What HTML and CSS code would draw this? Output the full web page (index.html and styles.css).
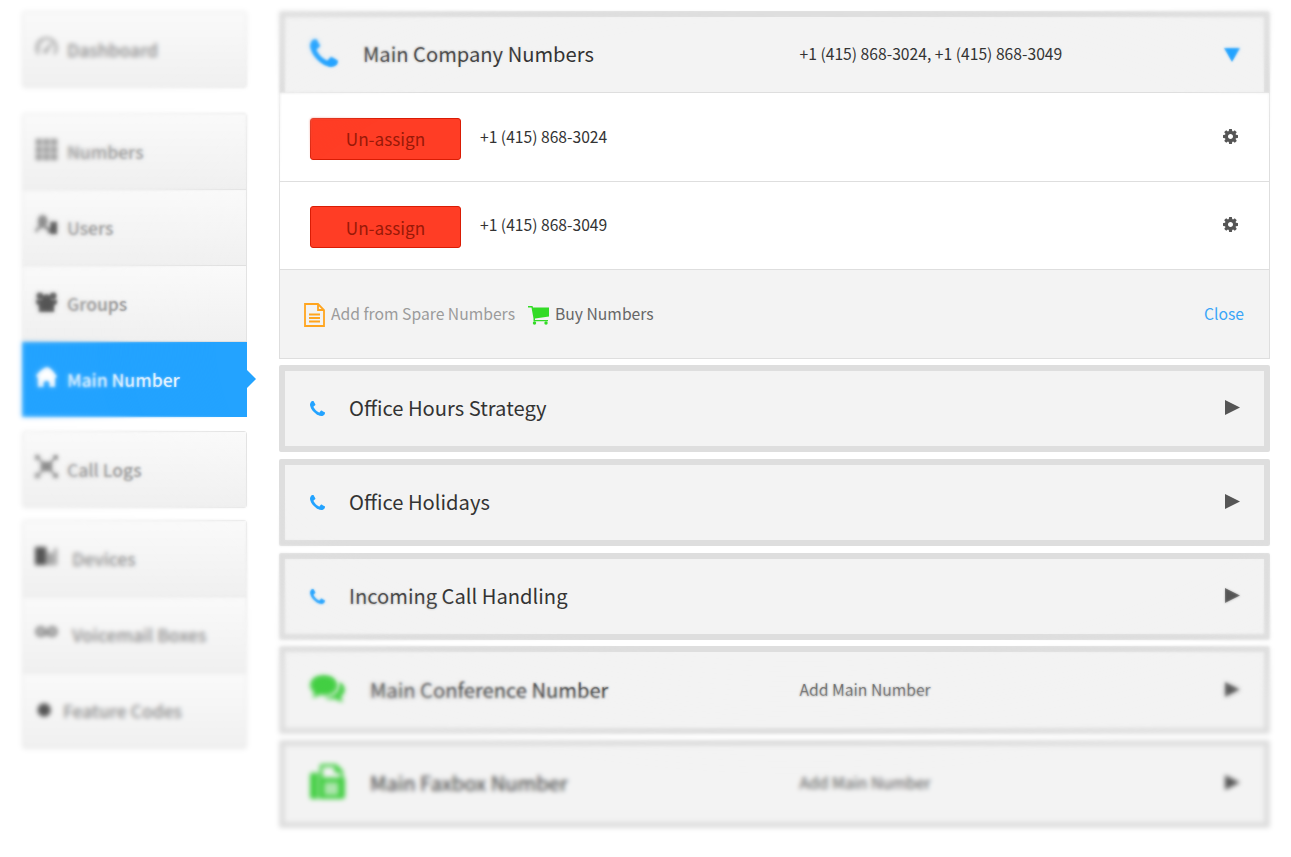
FILE: index.html
```html
<!DOCTYPE html>
<html lang="en">
<head>
<meta charset="utf-8">
<title>Main Number</title>
<link rel="stylesheet" href="styles.css">
</head>
<body>
<svg class="defs" width="0" height="0">
  <symbol id="phone" viewBox="0 128 1408 1408"><path d="M1408 1240q0 27-10 70.5t-21 68.5q-21 50-122 106-94 51-186 51-27 0-53-3.5t-57.5-12.5-47-14.5-55.5-20.5-49-18q-98-35-175-83-127-79-264-216t-216-264q-48-77-83-175-3-9-18-49t-20.5-55.5-14.5-47-12.5-57.5-3.5-53q0-92 51-186 56-101 106-122 25-11 68.5-21t70.5-10q14 0 21 3 18 6 53 76 11 19 30 54t35 63.5 31 53.5q3 4 17.5 25t21.5 35.5 7 28.5q0 20-28.5 50t-62 55-62 53-28.5 46q0 9 5 22.5t8.5 20.5 14 24 11.5 19q76 137 174 235t235 174q2 1 19 11.5t24 14 20.5 8.5 22.5 5q18 0 46-28.5t53-62 55-62 50-28.5q14 0 28.5 7t35.5 21.5 25 17.5q25 15 53.5 31t63.5 35 54 30q70 35 76 53 3 7 3 21z"/></symbol>
  <symbol id="cog" viewBox="128 128 1536 1536"><path d="M1152 896q0-106-75-181t-181-75-181 75-75 181 75 181 181 75 181-75 75-181zm512-109v222q0 12-8 23t-20 13l-185 28q-19 54-39 91 35 50 107 138 10 12 10 25t-9 23q-27 37-99 108t-94 71q-12 0-26-9l-138-108q-44 23-91 38-16 136-29 186-7 28-36 28h-222q-14 0-24.5-8.5t-11.5-21.5l-28-184q-49-16-90-37l-141 107q-10 9-25 9-14 0-25-11-126-114-165-168-7-10-7-23 0-12 8-23 15-21 51-66.5t54-70.5q-27-50-41-99l-183-27q-13-2-21-12.5t-8-23.5v-222q0-12 8-23t19-13l186-28q14-46 39-92-40-57-107-138-10-12-10-24 0-10 9-23 26-36 98.5-107.5t94.5-71.5q13 0 26 10l138 107q44-23 91-38 16-136 29-186 7-28 36-28h222q14 0 24.5 8.5t11.5 21.5l28 184q49 16 90 37l142-107q9-9 24-9 13 0 25 10 129 119 165 170 7 8 7 22 0 12-8 23-15 21-51 66.5t-54 70.5q26 50 41 98l183 28q13 2 21 12.5t8 23.5z"/></symbol>
  <symbol id="right" viewBox="0 0 15 15"><path d="M0 0L15 7.5L0 15z"/></symbol>
</svg>
<div class="app">
  <nav class="sidebar">
    <div class="nav-group">
      <a class="nav-item"><svg class="nav-icon" viewBox="0 0 24 24"><path class="line" d="M4 19A10.3 10.3 0 1 1 20 19M11 16L17 8M4 12h2M7 6l1 1"/><circle cx="11" cy="16" r="2"/></svg><span>Dashboard</span></a>
    </div>
    <div class="nav-group main-group">
      <a class="nav-item"><svg class="nav-icon" viewBox="0 0 24 24"><path d="M1 1h6v6H1zM9 1h6v6H9zM17 1h6v6h-6zM1 9h6v6H1zM9 9h6v6H9zM17 9h6v6h-6zM1 17h6v6H1zM9 17h6v6H9zM17 17h6v6h-6z"/></svg><span>Numbers</span></a>
      <a class="nav-item"><svg class="nav-icon" viewBox="0 0 24 24"><path d="M3 8q0-7 5-7t5 7q0 2-2 4l6 3v5h-4v-3l-5-3-5 3v2H0q0-5 4-6Q3 11 3 8z"/><path class="dark" d="M16 8h7v13h-7z"/></svg><span>Users</span></a>
      <a class="nav-item"><svg class="nav-icon dark groups" viewBox="0 0 24 24"><circle cx="5" cy="5" r="3.5"/><circle cx="19" cy="5" r="3.5"/><circle cx="12" cy="8" r="4.5"/><path d="M1 9h22v4l-3 2v7H4v-7l-3-2z"/></svg><span>Groups</span></a>
      <a class="nav-item active"><svg class="nav-icon" viewBox="0 0 24 24"><path d="M12 1q5 0 11 10l-2 2v9h-6v-5q-3-3-6 0v5H3v-9l-2-3Q5 4 12 1z"/></svg><span>Main Number</span></a>
    </div>
    <div class="nav-group logs-group">
      <a class="nav-item"><svg class="nav-icon" viewBox="0 0 24 24"><path class="line" d="M3 3L21 21M21 3L3 21"/><path d="M6 7h12v10H6zM0 0h5v5H0zM19 0h5v5h-5zM0 19h5v5H0zM19 19h5v5h-5z"/></svg><span>Call Logs</span></a>
    </div>
    <div class="nav-group last-group">
      <a class="nav-item wide"><svg class="nav-icon dark" viewBox="0 0 24 24"><path d="M0 2h12v19H0z"/><path opacity=".55" d="M13 8h6v13h-6zM20 3h3v18h-3z"/></svg><span>Devices</span></a>
      <a class="nav-item wide"><svg class="nav-icon" viewBox="0 0 24 24"><path class="line" stroke-width="3" d="M6 14h12"/><circle class="voice" cx="6" cy="11" r="4"/><circle class="voice" cx="18" cy="11" r="4"/></svg><span>Voicemail Boxes</span></a>
      <a class="nav-item narrow"><svg class="nav-icon dark" viewBox="0 0 24 24"><circle cx="11" cy="12" r="8"/></svg><span>Feature Codes</span></a>
    </div>
  </nav>
  <main class="content">
    <section class="company">
      <header class="card-row company-head">
        <svg class="phone-big"><use href="#phone"/></svg>
        <h2 class="title">Main Company Numbers</h2>
        <span class="value">+1 (415) 868-3024, +1 (415) 868-3049</span>
        <svg class="arrow open" viewBox="0 0 16 14"><path d="M0 0H16L8 14z"/></svg>
      </header>
      <div class="number-row"><button class="unassign">Un-assign</button><span class="number">+1 (415) 868-3024</span><svg class="cog"><use href="#cog"/></svg></div>
      <div class="number-row"><button class="unassign">Un-assign</button><span class="number">+1 (415) 868-3049</span><svg class="cog"><use href="#cog"/></svg></div>
      <footer class="company-foot">
        <svg class="file" viewBox="0 0 21 24"><path d="M1 1H14L20 7V23H1zM14 1V7H20M5 11.500H16M5 15H16M5 18.500H16"/></svg>
        <span class="spare">Add from Spare Numbers</span>
        <svg class="cart" viewBox="0 0 21 19"><path d="M0 0H4.500L5 1.500H21V10.500L7 12.500V14H20V15.200H5.500V12.500L3.500 1.500H0z"/><circle cx="6.500" cy="17" r="1.700"/><circle cx="18" cy="17" r="1.700"/></svg>
        <span class="buy">Buy Numbers</span>
        <a class="close">Close</a>
      </footer>
    </section>
    <section class="card card-row"><svg class="phone-small"><use href="#phone"/></svg><h2 class="title">Office Hours Strategy</h2><svg class="arrow"><use href="#right"/></svg></section>
    <section class="card card-row"><svg class="phone-small"><use href="#phone"/></svg><h2 class="title">Office Holidays</h2><svg class="arrow"><use href="#right"/></svg></section>
    <section class="card card-row"><svg class="phone-small"><use href="#phone"/></svg><h2 class="title">Incoming Call Handling</h2><svg class="arrow"><use href="#right"/></svg></section>
    <section class="card card-row"><svg class="chat" viewBox="0 0 36 29"><path d="M14 0C22 0 28 4 28 10.500S22 21 14 21Q12 21 10 20.500Q7 23 2 23.500Q4 21 4.500 18.500Q0 15 0 10.500C0 4 6 0 14 0z"/><path d="M30.500 7Q36 10 36 15.500Q36 19 32 22Q32 25 34.500 28Q29 27.500 26 24.500Q20 26 14.500 23.500Q30 22 30.500 10z"/></svg><h2 class="title">Main Conference Number</h2><span class="value">Add Main Number</span><svg class="arrow"><use href="#right"/></svg></section>
    <section class="card card-row"><svg class="fax" viewBox="0 0 36 36"><path fill-rule="evenodd" d="M2 9H8V36H2Q0 36 0 34V11Q0 9 2 9zM9 9H10V2Q10 0 12 0H27L34 7V13Q36 14 36 16V33Q36 36 33 36H9zM13 3V14H31V9H25V3zM15 19V32H29V19z"/><path opacity=".4" d="M15 19h14v13H15z"/></svg><h2 class="title">Main Faxbox Number</h2><span class="value">Add Main Number</span><svg class="arrow"><use href="#right"/></svg></section>
  </main>
</div>
<div class="focus focus-soft"></div>
<div class="focus focus-strong"></div>
</body>
</html>
```
FILE: styles.css
```css
* { box-sizing: border-box; }
body { margin: 0; background: #fff; font-family: "Noto Sans CJK SC", "Noto Sans", sans-serif; color: #333; overflow: hidden; }
.defs { position: absolute; }
svg { display: block; flex: none; fill: currentColor; }
.app { display: flex; align-items: flex-start; padding: 11px 22px 0 22px; height: 857px; }

/* Sidebar */
.sidebar { width: 225px; margin-right: 32px; flex: none; }
.nav-group { border: 1px solid #e3e3e3; border-radius: 3px; }
.main-group { margin-top: 25px; }
.logs-group { margin-top: 14px; }
.last-group { margin-top: 12px; }
.nav-item { display: flex; align-items: center; height: 76px; padding: 1px 0 0 12px; gap: 9px; font-size: 17.5px; font-weight: 500; line-height: 24px; color: #8c8c8c; background: linear-gradient(#fafafa, #f0f0f0); position: relative; white-space: nowrap; }
.nav-item:first-child { height: 75px; }
.nav-item + .nav-item { border-top: 1px solid #e0e0e0; padding-top: 0; }
.nav-icon { width: 23px; height: 23px; color: #8a8a8a; margin-top: -5px; }
.nav-icon.dark, .nav-icon .dark { color: #555; fill: #555; }
.nav-icon.groups { margin-top: -2px; }
.logs-group .nav-icon { margin-top: -8px; }
.nav-icon .line { fill: none; stroke: currentColor; stroke-width: 2; }
.nav-icon .voice { fill: none; stroke: #777; stroke-width: 3; }
.nav-item.wide { gap: 14px; }
.nav-item.narrow { gap: 8px; }
.narrow .nav-icon { width: 20px; height: 20px; margin-top: -1px; }
.nav-item.active { color: #fff; background: #23a3ff; background-clip: padding-box; margin: 0 -1px -1px; padding-left: 13px; }
.active .nav-icon { color: #fff; }
.active::after { content: ""; position: absolute; left: 100%; top: 28px; border: 9px solid transparent; border-left-color: #23a3ff; border-right: 0; }

/* Content */
.content { flex: 1; min-width: 0; display: flex; flex-direction: column; gap: 6.3px; margin-right: -1px; }
.title { margin: 0; font-size: 20.17px; font-weight: 400; line-height: 30px; }
.card-row { display: grid; grid-template-columns: auto 1fr 425px 15px; align-items: center; background: #f3f3f3; }
.card-row .title { grid-column: 2; }
.value { grid-column: 3; font-size: 15.68px; line-height: 24px; }
.card-row .arrow { grid-column: 4; width: 15px; height: 15px; color: #555; }
.card { height: 87.5px; border: 6px solid #dedede; border-radius: 2px; padding: 0 24.5px 1px 25px; }
.card .arrow { margin-top: -1px; }
.card .value { color: #555; }
.phone-big { width: 28px; height: 28px; color: #23a3ff; margin-right: 25px; margin-top: -4px; }
.phone-small { width: 15px; height: 15px; color: #23a3ff; margin-right: 24px; margin-top: 1px; }
.chat { width: 35px; height: 28px; color: #43cf43; margin-right: 25px; margin-top: -2px; }
.fax { width: 35px; height: 35px; color: #43cf43; margin-right: 25px; margin-top: -3px; }
.company { height: 347.7px; border-radius: 2px; }
.company-head { height: 82px; border: 6px solid #dedede; border-bottom: 1px solid #dedede; border-radius: 2px 2px 0 0; padding: 0 24.5px 2px 25px; }
.company-head .phone-big { margin-top: -2px; }
.company-head .arrow.open { width: 16px; height: 14px; color: #23a3ff; margin: 2px 0 0 -.5px; }
.number-row { height: 88.5px; display: flex; align-items: center; padding: 0 31px 0 30px; border: 1px solid #dedede; border-top: 0; }
.unassign { width: 151px; height: 42px; padding: 0; border: 1px solid #d91c05; border-radius: 3px; background: #ff3d25; color: #991908; font: 400 17.2px/39px "Noto Sans CJK SC", sans-serif; margin: 4px 19px 0 0; }
.number { font-size: 15.65px; line-height: 24px; flex: 1; margin-top: -.5px; }
.cog { width: 15px; height: 15px; color: #555; }
.number-row .cog { margin-top: -1px; }
.company-foot { height: 88.5px; display: flex; align-items: center; padding: 0 25px 0 24px; border: 1px solid #dedede; border-top: 0; background: #f3f3f3; font-size: 15.7px; line-height: 24px; }
.company-foot span, .close { margin-top: 1px; }
.file { width: 21px; height: 24px; fill: none; stroke: #ffa51f; stroke-width: 1.8; margin: 2px 6px 0 0; }
.spare { color: #9b9b9b; margin-right: 13px; }
.cart { width: 21px; height: 19px; color: #33db26; margin: 4px 6px 0 0; }
.buy { color: #666; flex: 1; }
.close { color: #3aa5f8; }

/* Elliptical focus area: the picture softens toward the edges */
.focus { position: fixed; inset: 0; pointer-events: none; }
.focus-soft { backdrop-filter: blur(1px); mask-image: radial-gradient(664px 360px at 800px 340px, transparent 88%, #000 106%); }
.focus-strong { backdrop-filter: blur(2px); mask-image: radial-gradient(664px 360px at 800px 340px, transparent 101%, #000 122%); }
```
